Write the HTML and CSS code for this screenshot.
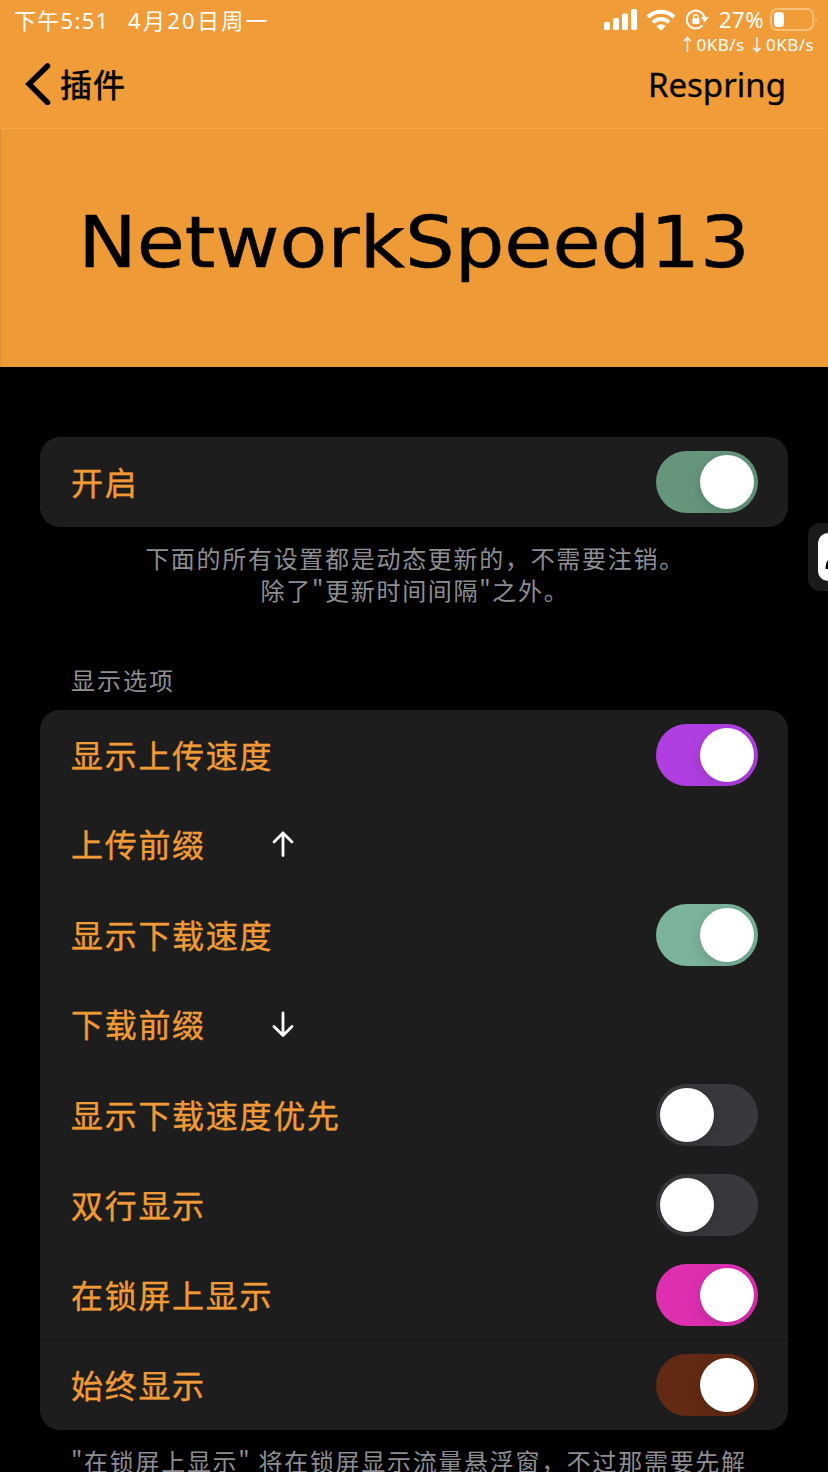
FILE: index.html
```html
<!DOCTYPE html>
<html lang="zh-CN">
<head>
<meta charset="utf-8">
<title>NetworkSpeed13</title>
<link rel="stylesheet" href="styles.css">
</head>
<body>
<div class="screen">
  <header class="top">
    <div class="status">
      <span class="time">下午<span class="num">5:51</span></span>
      <span class="date"><span class="num">4</span>月<span class="num">20</span>日周一</span>
      <svg class="signal" width="34" height="22" viewBox="0 0 34 22" fill="#fff">
        <rect x="0" y="13" width="6" height="8" rx="1.5"/><rect x="9" y="9" width="6" height="12" rx="1.5"/>
        <rect x="18" y="4.500" width="6" height="16.500" rx="1.500"/><rect x="27" y="0" width="6" height="21" rx="1.500"/>
      </svg>
      <svg class="wifi" width="30" height="22" viewBox="0 0 30 22" fill="none" stroke="#fff" stroke-width="4">
        <path d="M2 8.200A18.500 18.500 0 0 1 28 8.200"/><path d="M7 13.400A11.300 11.300 0 0 1 23 13.400"/>
        <path d="M15 22l-4.700-4.900a6.800 6.800 0 0 1 9.400 0z" fill="#fff" stroke="none"/>
      </svg>
      <svg class="lock" width="24" height="22" viewBox="0 0 24 22" fill="none" stroke="#fff" stroke-width="2">
        <path d="M18.500 9.500A8.900 8.900 0 1 0 16.500 16.200"/>
        <path d="M14.800 8h8l-4 5.300z" fill="#fff" stroke="none"/>
        <rect x="6.200" y="9.200" width="7.200" height="5.800" rx="1" fill="#fff" stroke="none"/>
        <path d="M7.700 10V7.800a2.100 2.100 0 0 1 4.200 0V10" stroke-width="1.400"/>
      </svg>
      <span class="percent">27%</span>
      <svg class="battery" width="48" height="24" viewBox="0 0 48 24">
        <rect x="1" y="1" width="42" height="21" rx="6" fill="none" stroke="#f6c078" stroke-width="2"/>
        <rect x="4" y="4" width="10" height="15" rx="3.500" fill="#fff"/>
        <path d="M45.500 8.500q2.500 3 0 6.500z" fill="#f6c078"/>
      </svg>
    </div>
    <div class="speed"><span>↑0KB/s</span><span>↓0KB/s</span></div>
    <nav class="nav">
      <a class="back">
        <svg width="26" height="42" viewBox="0 0 26 42" fill="none" stroke="#000" stroke-width="5.500" stroke-linecap="round" stroke-linejoin="miter"><path d="M22.500 3L4 21l18.500 18.500"/></svg>
        <span>插件</span>
      </a>
      <a class="respring">Respring</a>
    </nav>
  </header>
  <section class="banner"><h1>NetworkSpeed13</h1></section>
  <main>
    <section class="card"><div class="row"><span>开启</span><i class="switch on green"></i></div></section>
    <p class="note center">下面的所有设置都是动态更新的，不需要注销。<br>除了"更新时间间隔"之外。</p>
    <h2>显示选项</h2>
    <section class="card">
      <div class="row"><span>显示上传速度</span><i class="switch on purple"></i></div>
      <div class="row field"><span>上传前缀</span><svg width="24" height="28" viewBox="0 0 24 28"><path d="M12 25.500V3M3 12l9-9 9 9"/></svg></div>
      <div class="row"><span>显示下载速度</span><i class="switch on mint"></i></div>
      <div class="row field"><span>下载前缀</span><svg width="24" height="28" viewBox="0 0 24 28"><path d="M12 3V25.500M3 16.500l9 9 9-9"/></svg></div>
      <div class="row"><span>显示下载速度优先</span><i class="switch"></i></div>
      <div class="row"><span>双行显示</span><i class="switch"></i></div>
      <div class="row"><span>在锁屏上显示</span><i class="switch on pink"></i></div>
      <div class="row divided"><span>始终显示</span><i class="switch on brown"></i></div>
    </section>
    <p class="note foot">"在锁屏上显示" 将在锁屏显示流量悬浮窗，不过那需要先解</p>
  </main>
  <aside class="handle"><div><svg width="10" height="48" viewBox="0 0 10 48"><path d="M7.500 36q0-6 2.500-9v9z"/></svg></div></aside>
</div>
</body>
</html>
```
FILE: styles.css
```css
* { box-sizing: border-box; }
body { margin: 0; background: #000; }
.screen {
  position: relative;
  width: 828px;
  height: 1472px;
  overflow: hidden;
  background: #000;
  font-family: "Noto Sans CJK SC", sans-serif;
}
.top { height: 128px; background: #f09c38; }
.status {
  display: flex;
  align-items: center;
  height: 40px;
  padding-left: 14px;
  color: #fff;
  font-size: 22px;
  line-height: 38px;
  white-space: nowrap;
}
.time, .date, .percent { height: 40px; }
.num, .percent, .speed, .respring { font-family: "Noto Sans", "Noto Sans CJK SC", sans-serif; }
.time { width: 114px; letter-spacing: 1.300px; }
.date { width: 476px; letter-spacing: 2.300px; }
.wifi { margin-left: 8px; }
.lock { margin-left: 10px; }
.percent { width: 51px; margin-left: 9px; letter-spacing: .5px; }
.battery { flex: none; }
.speed {
  display: flex;
  justify-content: flex-end;
  gap: 4px;
  height: 10px;
  padding-right: 14px;
  color: #fff;
  font-size: 17px;
  letter-spacing: .45px;
  line-height: 10px;
}
.nav {
  display: flex;
  align-items: center;
  justify-content: space-between;
  height: 68px;
  padding: 0 42px 0 25px;
  color: #000;
}
.back { display: flex; align-items: center; gap: 9px; font-size: 32px; letter-spacing: 1px; line-height: 60px; }
.back span { height: 62px; -webkit-text-stroke: .6px; }
.respring { height: 58px; font-size: 33px; line-height: 60px; -webkit-text-stroke: .3px; }
.banner {
  height: 239px;
  border-top: 1px solid #f2a74a;
  border-left: 1px solid #df9135;
  background: #ee9b37;
}
h1 {
  width: 660px;
  margin: 0;
  padding: 71px 0 0 71px;
  color: #000;
  font: 400 72px/84px "DejaVu Sans", sans-serif;
  transform: scaleX(1.087);
  transform-origin: 0 0;
  -webkit-text-stroke: .5px;
}
main { padding: 70px 40px 0; }
.card { overflow: hidden; border-radius: 20px; background: #1d1d1d; }
.row {
  display: flex;
  align-items: center;
  justify-content: space-between;
  height: 90px;
  padding: 0 30px 0 31px;
  color: #f09a37;
  font-size: 32px;
  letter-spacing: 1.700px;
  line-height: 60px;
}
.row span { height: 62px; -webkit-text-stroke: .4px; }
.field { justify-content: flex-start; padding-bottom: 2px; }
.field span { width: 200px; }
.field svg { fill: none; stroke: #fff; stroke-width: 2.800; stroke-linecap: round; stroke-linejoin: round; }
.divided { box-shadow: inset 0 1px #131313; }
.switch { width: 102px; height: 62px; overflow: hidden; padding: 4px; border-radius: 31px; background: #39383d; }
.switch::before {
  display: block;
  width: 54px;
  height: 54px;
  border-radius: 50%;
  background: #fff;
  box-shadow: 0 4px 14px rgba(0, 0, 0, .15);
  content: "";
}
.switch.on::before { margin-left: 40px; }
.green { background: #65967c; }
.purple { background: #b03fe2; }
.mint { background: #7bb39b; }
.pink { background: #dd30b0; }
.brown { background: #632a13; }
.note { margin: 0; color: #8e8e93; font-size: 24px; letter-spacing: 1.700px; line-height: 32px; white-space: nowrap; }
.center { height: 64px; margin-top: 15px; padding-left: 2px; text-align: center; }
h2 { height: 28px; margin: 60px 0 16px 31px; color: #8e8e93; font-size: 24px; font-weight: 400; letter-spacing: 2px; line-height: 28px; }
.foot { margin: 15px 0 0 31px; }
.handle {
  position: absolute;
  top: 523px;
  right: 0;
  width: 20px;
  height: 68px;
  padding: 10px 0 10px 10px;
  border-radius: 12px 0 0 12px;
  background: #1a1a1a;
}
.handle div { height: 48px; overflow: hidden; border-radius: 10px 0 0 10px; background: #fff; }
```
